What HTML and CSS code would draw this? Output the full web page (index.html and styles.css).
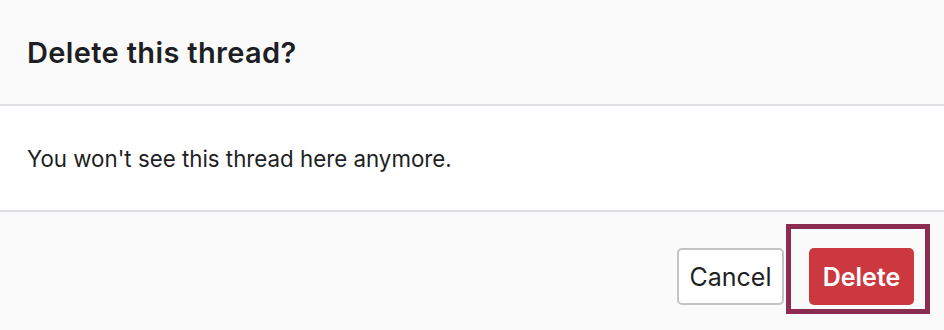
FILE: index.html
```html
<!DOCTYPE html>
<html lang="en">
<head>
  <meta charset="UTF-8">
  <meta name="viewport" content="width=device-width, initial-scale=1.0">
  <title>Delete thread</title>
  <link rel="stylesheet" href="styles.css">
</head>
<body>
  <div class="dialog">
    <div class="dialog-header">
      <h2>Delete this thread?</h2>
    </div>

    <div class="dialog-body">
      <p>You won't see this thread here anymore.</p>
    </div>

    <div class="dialog-footer">
      <button class="btn btn-cancel">Cancel</button>
      <button class="btn btn-delete">Delete</button>
    </div>
  </div>
</body>
</html>
```

FILE: styles.css
```css
body {
  font-family: Inter, 'Noto Sans', sans-serif;
  margin: 0;
  padding: 0;
  background-color: #fafafa;
  color: #1e1f24;
}

.dialog {
  display: flex;
  flex-direction: column;
}

.dialog-header {
  height: 104px;
  display: flex;
  align-items: center;
  padding: 0 27px;
  background-color: #fafafa;
  border-bottom: 2px solid #dfdfe4;
}

.dialog-header h2 {
  margin: 0;
  font-size: 29px;
  font-weight: 600;
  letter-spacing: 0.35px;
}

.dialog-body {
  height: 104px;
  display: flex;
  align-items: center;
  padding: 0 27px;
  background-color: #ffffff;
  border-bottom: 2px solid #dfdfe4;
}

.dialog-body p {
  margin: 0;
  font-size: 22.3px;
}

.dialog-footer {
  display: flex;
  justify-content: flex-end;
  align-items: center;
  gap: 25px;
  padding: 36px 30px;
  background-color: #fafafa;
}

.btn {
  font-family: inherit;
  font-size: 25px;
  height: 57px;
  padding: 0;
  border-radius: 5px;
  cursor: pointer;
}

.btn-cancel {
  background-color: #ffffff;
  color: #1e1f24;
  border: 2px solid #c4c4c8;
  width: 107px;
}

.btn-delete {
  position: relative;
  width: 105px;
  background-color: #cb383f;
  color: #ffffff;
  border: none;
  font-weight: 600;
}

/* focus highlight box drawn around the delete button */
.btn-delete::after {
  content: '';
  position: absolute;
  top: -24px;
  left: -23px;
  right: -16px;
  bottom: -9px;
  border: 5px solid #8b2c50;
  pointer-events: none;
}
```
